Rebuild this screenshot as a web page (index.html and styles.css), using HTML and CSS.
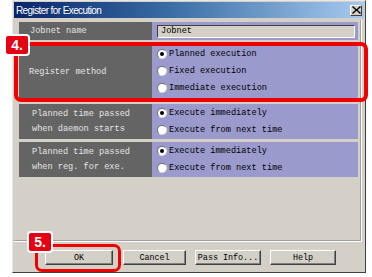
FILE: index.html
```html
<!DOCTYPE html>
<html>
<head>
  <title>Register for Execution</title>
  <link rel="stylesheet" href="styles.css">
</head>
<body>
  <div class="window">
    <div class="titlebar">
      <span class="title">Register for Execution</span>
      <span class="close">
        <svg width="9" height="8" viewBox="0 0 9 8"><path d="M1 0 L4.5 3.2 L8 0 L9 1 L5.6 4 L9 7 L8 8 L4.5 4.8 L1 8 L0 7 L3.4 4 L0 1 Z" fill="#000"/></svg>
      </span>
    </div>

    <div class="panel">
      <div class="row row-name">
        <div class="label">Jobnet name</div>
        <div class="value">
          <div class="field">Jobnet</div>
        </div>
      </div>

      <div class="row row-method">
        <div class="label">Register method</div>
        <div class="value options">
          <div class="option"><span class="radio on"></span>Planned execution</div>
          <div class="option"><span class="radio"></span>Fixed execution</div>
          <div class="option"><span class="radio"></span>Immediate execution</div>
        </div>
      </div>

      <div class="row row-time">
        <div class="label two">Planned time passed<br>when daemon starts</div>
        <div class="value options">
          <div class="option"><span class="radio on"></span>Execute immediately</div>
          <div class="option"><span class="radio"></span>Execute from next time</div>
        </div>
      </div>

      <div class="row row-time">
        <div class="label two">Planned time passed<br>when reg. for exe.</div>
        <div class="value options">
          <div class="option"><span class="radio on"></span>Execute immediately</div>
          <div class="option"><span class="radio"></span>Execute from next time</div>
        </div>
      </div>
    </div>

    <div class="buttons">
      <button class="btn btn-ok">OK</button>
      <button class="btn btn-cancel">Cancel</button>
      <button class="btn btn-pass">Pass Info...</button>
      <button class="btn btn-help">Help</button>
    </div>
  </div>

  <!-- callouts -->
  <div class="callout callout-method"></div>
  <div class="badge badge-4">4.</div>
  <div class="callout callout-ok"></div>
  <div class="badge badge-5">5.</div>
</body>
</html>
```

FILE: styles.css
```css
body {
    margin: 0;
    background: #fff;
    font-family: "Liberation Mono", monospace;
}

.window {
    margin-left: 12px;
    width: 354px;
    height: 273px;
    box-sizing: border-box;
    background: #d4d0c8;
    border: 1px solid;
    border-color: #e8e8e8 #404040 #404040 #e8e8e8;
}

.titlebar {
    margin: 1px 1px 0 1px;
    height: 16px;
    display: flex;
    align-items: center;
    justify-content: space-between;
    padding: 0 2px 0 2px;
    background: linear-gradient(to right, #0a246a, #3a6ea5 45%, #a6caf0);
}

.title {
    font-family: "Liberation Sans", sans-serif;
    font-size: 10px;
    letter-spacing: -0.6px;
    color: #fff;
}

.close {
    width: 10px;
    height: 9px;
    display: flex;
    align-items: center;
    justify-content: center;
    background: #d4d0c8;
    border: 1px solid;
    border-color: #fff #404040 #404040 #fff;
}

.panel {
    margin: 2px 1px 0 1px;
    width: 348px;
    height: 222px;
    box-sizing: border-box;
    padding: 2px 0 0 5px;
    border-right: 1px solid #fff;
    border-bottom: 1px solid #fff;
    box-shadow: inset -1px -1px 0 #a0a0a0;
    display: flex;
    flex-direction: column;
    gap: 3px;
}

.row {
    display: flex;
    width: 339px;
    font-size: 8.6px;
}

.row-name { height: 18px; }
.row-method { height: 58px; }
.row-time { height: 35px; }

.label {
    width: 133px;
    background: #646464;
    color: #e4e4e4;
    display: flex;
    align-items: center;
    padding-left: 10px;
    box-sizing: border-box;
}

.row-name .label { padding-left: 11px; }
.label.two {
    padding-left: 13px;
    line-height: 15px;
}

.value {
    flex: 1;
    background: #9a9acc;
    color: #000;
}

.row-name .value {
    padding: 3px 3px 2px 5px;
    display: flex;
}

.field {
    flex: 1;
    background: #d4d0c8;
    border: 1px solid;
    border-color: #404040 #fff #fff #404040;
    padding-left: 3px;
    line-height: 11px;
}

.options {
    display: flex;
    flex-direction: column;
    justify-content: space-around;
    padding-left: 6px;
}

.row-method .options { padding: 2px 0 4px 5px; }
.row-time .options { padding: 0 0 1px 5px; }

.option {
    display: flex;
    align-items: center;
}

.radio {
    width: 10px;
    height: 10px;
    border-radius: 50%;
    box-sizing: border-box;
    background: #fff;
    border: 1px solid;
    border-color: #707070 #e0e0e0 #e0e0e0 #707070;
    margin-right: 2px;
    position: relative;
}

.radio.on::after {
    content: "";
    position: absolute;
    left: 2px;
    top: 2px;
    width: 4px;
    height: 4px;
    border-radius: 50%;
    background: #000;
}

.buttons {
    display: flex;
    gap: 9px;
    padding: 8px 0 0 32px;
}

.btn {
    height: 15px;
    padding: 0;
    font-family: "Liberation Mono", monospace;
    font-size: 8.4px;
    color: #000;
    background: #d4d0c8;
    border: 1px solid;
    border-color: #fff #404040 #404040 #fff;
    box-shadow: inset -1px -1px 0 #808080;
}

.btn-ok { width: 68px; }
.btn-cancel { width: 63px; margin-left: 1px; }
.btn-pass { width: 66px; }
.btn-help { width: 66px; }

.callout {
    position: absolute;
    border: 4px solid #f00000;
    border-radius: 7px;
    box-sizing: border-box;
}

.callout-method {
    left: 14px;
    top: 42px;
    width: 354px;
    height: 60px;
}

.callout-ok {
    left: 35px;
    top: 244px;
    width: 86px;
    height: 28px;
    border-width: 3px;
}

.badge {
    position: absolute;
    width: 26px;
    height: 22px;
    box-sizing: border-box;
    background: #e60012;
    border: 2px solid #fff;
    border-radius: 4px;
    color: #fff;
    font-family: "Liberation Sans", sans-serif;
    font-weight: bold;
    font-size: 14px;
    line-height: 18px;
    text-align: center;
}

.badge-4 { left: 4px; top: 34px; }
.badge-5 { left: 27px; top: 231px; }
```
